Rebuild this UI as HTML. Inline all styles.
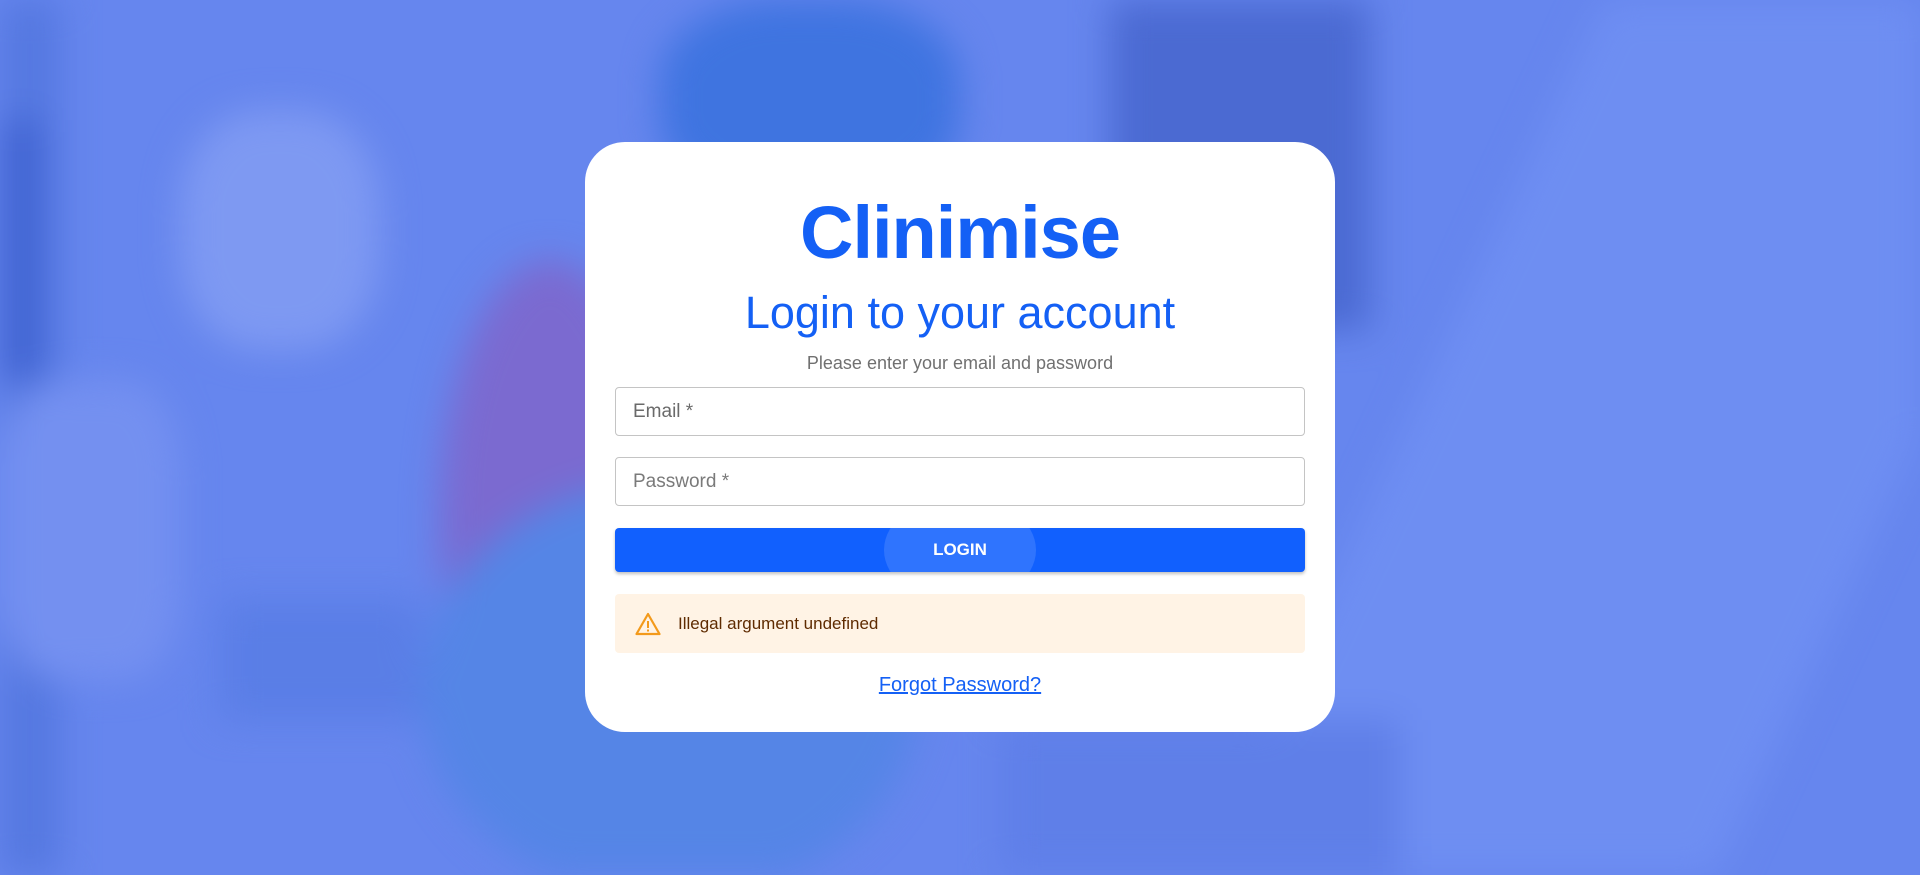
<!DOCTYPE html>
<html><head><meta charset="utf-8"><style>
*{box-sizing:border-box;margin:0;padding:0}
body{width:1920px;height:875px;overflow:hidden;position:relative;background:#6686ee;font-family:"Liberation Sans",sans-serif}
.bg{position:absolute;inset:0;overflow:hidden;filter:blur(18px)}
.b{position:absolute}
.card{position:absolute;left:585px;top:142px;width:750px;height:590px;background:#fff;border-radius:40px}
.brand{position:absolute;left:0;width:1920px;text-align:center;top:196px;color:#1460f5;font-size:74px;font-weight:bold;line-height:1;letter-spacing:-1px}
.h2{position:absolute;left:0;width:1920px;text-align:center;top:290px;color:#1460f5;font-size:45px;line-height:1}
.sub{position:absolute;left:0;width:1920px;text-align:center;top:353px;color:#707070;font-size:18px}
.inp{position:absolute;left:615px;width:690px;height:49px;border:1px solid #c4c4c4;border-radius:4px;background:#fff;color:#6a6a6a;font-size:19px;padding-left:17px;line-height:47px;text-align:left}
.btn{position:absolute;left:615px;top:528px;width:690px;height:44px;background:#1160fe;border-radius:4px;color:#fff;font-weight:bold;font-size:17px;line-height:44px;text-align:center;box-shadow:0 2px 3px rgba(0,0,0,.25);overflow:hidden}
.rip{position:absolute;left:269px;top:-32px;width:152px;height:108px;border-radius:50%;background:rgba(255,255,255,.13)}
.alert{position:absolute;left:615px;top:594px;width:690px;height:59px;background:#fff3e5;border-radius:4px;color:#5f2b01;font-size:17px;line-height:59px;text-align:left;padding-left:63px}
.fp{position:absolute;left:0;width:1920px;top:674px;text-align:center;color:#1460f5;font-size:20px;text-decoration:underline}
</style></head><body>
<div class="bg">
<div class="b" style="left:0;top:0;width:60px;height:875px;background:#5578e0"></div>
<div class="b" style="left:0;top:120px;width:40px;height:260px;background:#3f62d0"></div>
<div class="b" style="left:660px;top:0;width:300px;height:200px;background:#3f74e0;border-radius:40%"></div>
<div class="b" style="left:1110px;top:0;width:260px;height:330px;background:#4b6ad2"></div>
<div class="b" style="left:180px;top:110px;width:200px;height:240px;background:#7e99f2;border-radius:40%"></div>
<div class="b" style="left:440px;top:260px;width:220px;height:520px;background:#7b6ad0;border-radius:50%"></div>
<div class="b" style="left:420px;top:480px;width:500px;height:420px;background:#5585e6;border-radius:50%"></div>
<div class="b" style="left:0;top:380px;width:180px;height:300px;background:#7490f0;border-radius:30%"></div>
<div class="b" style="left:220px;top:600px;width:200px;height:120px;background:#5a7ee6"></div>
<div class="b" style="left:1500px;top:350px;width:120px;height:120px;background:#3e5fcc;transform:skewX(-20deg)"></div>
<div class="b" style="left:1400px;top:0;width:520px;height:875px;background:#6e8ef2;transform:skewX(-25deg)"></div>
<div class="b" style="left:1000px;top:720px;width:400px;height:155px;background:#5f7fe8"></div>
</div>
<div class="card"></div>
<div class="brand">Clinimise</div>
<div class="h2">Login to your account</div>
<div class="sub">Please enter your email and password</div>
<div class="inp" style="top:387px">Email *</div>
<div class="inp" style="top:457px;color:#7a7a7a">Password *</div>
<div class="btn"><div class="rip"></div><span style="position:relative">LOGIN</span></div>
<div class="alert"><svg style="position:absolute;left:20px;top:18px" width="26" height="24" viewBox="0 0 26 24"><path d="M13 2 L24.5 22 H1.5 Z" fill="none" stroke="#f39a1c" stroke-width="2.2" stroke-linejoin="round"/><rect x="12" y="9" width="2" height="7" fill="#f39a1c"/><rect x="12" y="17.5" width="2" height="2" fill="#f39a1c"/></svg>Illegal argument undefined</div>
<div class="fp">Forgot Password?</div>
</body></html>
